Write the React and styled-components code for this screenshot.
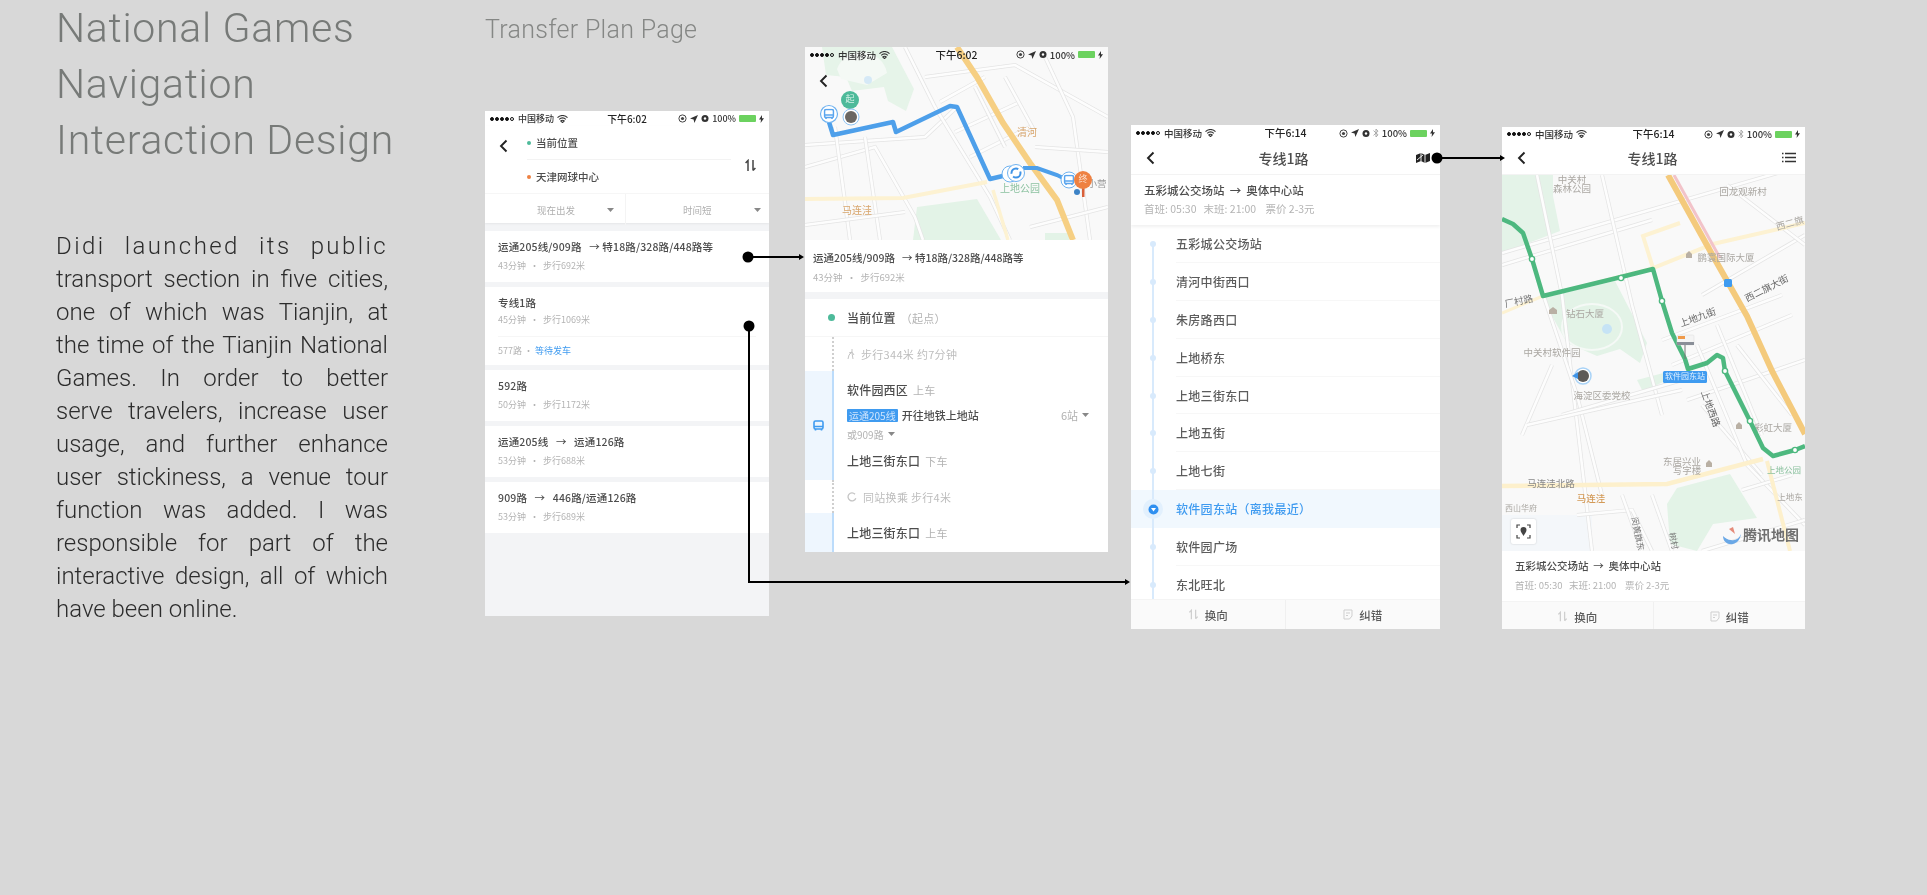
import React from "react";
import styled, { createGlobalStyle } from "styled-components";

const CJK = `"Noto Sans CJK SC", "Noto Sans", sans-serif`;

const GlobalStyle = createGlobalStyle`
  html, body {
    margin: 0;
    padding: 0;
    background: #d8d8d8;
  }
  body {
    overflow: hidden;
  }
`;

const Page = styled.div`
  position: relative;
  display: flex;
  align-items: flex-start;
  width: 1927px;
  height: 895px;
  background: #d8d8d8;
  overflow: hidden;
`;

const Intro = styled.div`
  flex: 0 0 332px;
  min-width: 0;
  margin-left: 56px;
`;

const Title = styled.h1`
  margin: 0;
  font: 300 41px/56px Roboto, sans-serif;
  letter-spacing: 0.7px;
  white-space: nowrap;
  color: #777a78;
  filter: blur(0.3px);
`;

const Body = styled.div`
  margin-top: 62px;
  font: 300 24px/33px Roboto, sans-serif;
  color: #2c2c2c;
  filter: blur(0.25px);
`;

const BodyLine = styled.div`
  white-space: nowrap;
  text-align: justify;
  text-align-last: ${(p) => (p.$last ? "left" : "justify")};
  letter-spacing: ${(p) => (p.$loose ? "2.4px" : "0")};
`;

const Showcase = styled.div`
  margin-left: 97px;
`;

const SectionName = styled.h2`
  margin: 0;
  height: 47px;
  padding-top: 13px;
  box-sizing: border-box;
  font: 300 25px/34px Roboto, sans-serif;
  letter-spacing: 0.3px;
  white-space: nowrap;
  color: #858785;
  filter: blur(0.3px);
`;

const Screens = styled.div`
  display: flex;
  align-items: flex-start;
`;

const Screen = styled.div`
  position: relative;
  display: flex;
  flex-direction: column;
  flex: none;
  width: ${(p) => p.$w}px;
  height: ${(p) => p.$h}px;
  margin-top: ${(p) => p.$top}px;
  margin-left: ${(p) => p.$left}px;
  background: ${(p) => p.$bg || "#fff"};
  overflow: hidden;
  font-family: ${CJK};
  filter: blur(0.45px);
`;

/* status bar */
const Status = styled.div`
  display: flex;
  align-items: center;
  justify-content: space-between;
  flex: none;
  height: ${(p) => p.$h}px;
  padding: 0 ${(p) => p.$pad}px;
  font-size: ${(p) => p.$fs}px;
  line-height: 12px;
  font-weight: 500;
  color: #333;
  background: ${(p) => (p.$over ? "transparent" : "#fff")};
  ${(p) => p.$over && "position: absolute; top: 0; left: 0; right: 0; z-index: 2;"}
`;

const StatusSide = styled.div`
  display: flex;
  align-items: center;
  gap: 3px;
  flex: 0 0 38%;
  justify-content: ${(p) => (p.$right ? "flex-end" : "flex-start")};
`;

const Time = styled.span`
  font-size: 1.1em;
  font-weight: 500;
  color: #222;
`;

const Signal = styled.span`
  display: inline-flex;
  gap: 1px;
  margin-right: 1px;
`;

const SignalDot = styled.i`
  width: 4px;
  height: 4px;
  border-radius: 50%;
  box-sizing: border-box;
  background: ${(p) => (p.$off ? "transparent" : "#111")};
  border: 1px solid #111;
`;

const Battery = styled.span`
  position: relative;
  width: 17px;
  height: 7px;
  border-radius: 1px;
  background: #6cd25f;
`;

function StatusBar({ time, bt, h = 19, pad = 5, fs = 9, over }) {
  return (
    <Status $h={h} $pad={pad} $fs={fs} $over={over}>
      <StatusSide>
        <Signal>
          {[0, 1, 2, 3, 4].map((i) => (
            <SignalDot key={i} $off={i === 4} />
          ))}
        </Signal>
        <span>中国移动</span>
        <svg width="11" height="8" viewBox="0 0 11 8">
          <path d="M.5 2.6a7 7 0 0 1 10 0M2.2 4.3a4.6 4.6 0 0 1 6.6 0M5.5 7.6 3.8 5.9a2.4 2.4 0 0 1 3.4 0z" fill="none" stroke="#333" strokeWidth="1.1" />
        </svg>
      </StatusSide>
      <Time>{time}</Time>
      <StatusSide $right>
        <svg width="9" height="9" viewBox="0 0 9 9">
          <circle cx="4.5" cy="4.5" r="3.6" fill="none" stroke="#444" />
          <circle cx="4.5" cy="4.5" r="1.6" fill="#444" />
        </svg>
        <svg width="8" height="8" viewBox="0 0 8 8">
          <path d="M8 0 0 3.6l3.6.8L4.4 8z" fill="#333" />
        </svg>
        <svg width="8" height="9" viewBox="0 0 8 9">
          <circle cx="4" cy="4.5" r="3.5" fill="#333" />
          <circle cx="4" cy="4.5" r="1.2" fill="#fff" />
        </svg>
        {bt && (
          <svg width="6" height="10" viewBox="0 0 6 10">
            <path d="M.5 2.6 5 6.8 3 9V1l2 2.2L.5 7.4" fill="none" stroke="#aaa" />
          </svg>
        )}
        <span>100%</span>
        <Battery />
        <svg width="5" height="8" viewBox="0 0 5 8">
          <path d="M3 0 0 4.6h2L1.6 8 5 3.2H3z" fill="#333" />
        </svg>
      </StatusSide>
    </Status>
  );
}

function Back({ size = 16 }) {
  return (
    <svg width={size} height={size} viewBox="0 0 16 16">
      <path d="M10.5 2.5 5 8l5.5 5.5" fill="none" stroke="#222" strokeWidth="1.9" />
    </svg>
  );
}

function Swap({ color = "#444", size = 13 }) {
  return (
    <svg width={size} height={size} viewBox="0 0 13 13">
      <path d="M4 12V1.5M1.6 4 4 1.5 4 4M9 1v10.5M11.4 9 9 11.5" fill="none" stroke={color} strokeWidth="1.5" />
    </svg>
  );
}

function Caret({ color = "#888" }) {
  return (
    <svg width="7" height="4" viewBox="0 0 7 4">
      <path d="M0 0h7L3.5 4z" fill={color} />
    </svg>
  );
}

/* plan list */
const PlanHeader = styled.div`
  position: relative;
  flex: none;
  height: 97px;
  background: #fff;
  box-shadow: 0 1px 2px rgba(0, 0, 0, 0.06);
`;

const PlaceRow = styled.div`
  display: flex;
  align-items: center;
  gap: 5px;
  height: 33px;
  margin-left: 42px;
  margin-right: 38px;
  font-size: 10.5px;
  color: #4d4d4d;
  font-weight: 500;
  border-bottom: ${(p) => (p.$line ? "1px solid #f3f3f3" : "0")};
`;

const PlaceDot = styled.i`
  width: 4px;
  height: 4px;
  border-radius: 50%;
  background: ${(p) => p.$color};
`;

const HeaderBack = styled.div`
  position: absolute;
  left: 11px;
  top: 9px;
`;

const HeaderSwap = styled.div`
  position: absolute;
  right: 12px;
  top: 27px;
`;

const Filters = styled.div`
  display: grid;
  grid-template-columns: 141px 1fr;
  height: 31px;
  border-top: 1px solid #f6f6f6;
`;

const Filter = styled.div`
  display: flex;
  align-items: center;
  justify-content: space-between;
  padding: 0 ${(p) => p.$right}px 0 ${(p) => p.$left}px;
  font-size: 9.5px;
  color: #b0b0b0;
  border-right: ${(p) => (p.$split ? "1px solid #f4f4f4" : "0")};
`;

const Plans = styled.div`
  flex: 1;
  display: flex;
  flex-direction: column;
  gap: 5px;
  padding-top: 8px;
  background: #f3f4f6;
`;

const Plan = styled.div`
  flex: none;
  height: ${(p) => p.$h || 51}px;
  padding: 8px 13px 0;
  box-sizing: border-box;
  background: #fff;
`;

const PlanTitle = styled.div`
  font-size: 10.5px;
  line-height: 16px;
  font-weight: 500;
  letter-spacing: 0.15px;
  color: #4d4d4d;
  white-space: pre;
`;

const PlanMeta = styled.div`
  margin-top: ${(p) => p.$gap || 4}px;
  font-size: 9px;
  line-height: 14px;
  color: #b4b4b4;
  white-space: pre;
`;

const PlanLine = styled.div`
  margin-top: 9px;
  padding-top: 7px;
  border-top: 1px solid #f6f6f6;
  font-size: 9px;
  line-height: 14px;
  color: #b4b4b4;
`;

const Waiting = styled.span`
  color: #3f9bf0;
`;

const plans = [
  ["运通205线/909路   → 特18路/328路/448路等", "43分钟  ·  步行692米"],
  null,
  ["592路", "50分钟  ·  步行1172米"],
  ["运通205线   →   运通126路", "53分钟  ·  步行688米"],
  ["909路   →   446路/运通126路", "53分钟  ·  步行689米"],
];

function PlanPage() {
  return (
    <Screen $w={284} $h={505} $top={64} $left={0} $bg="#f3f4f6">
      <StatusBar time="下午6:02" h={15} />
      <PlanHeader>
        <HeaderBack>
          <Back />
        </HeaderBack>
        <HeaderSwap>
          <Swap />
        </HeaderSwap>
        <PlaceRow $line>
          <PlaceDot $color="#4dba9a" />
          当前位置
        </PlaceRow>
        <PlaceRow>
          <PlaceDot $color="#ee8142" />
          天津网球中心
        </PlaceRow>
        <Filters>
          <Filter $left={52} $right={11} $split>
            现在出发 <Caret />
          </Filter>
          <Filter $left={57} $right={8}>
            时间短 <Caret />
          </Filter>
        </Filters>
      </PlanHeader>
      <Plans>
        {plans.map((plan, i) =>
          plan ? (
            <Plan key={i}>
              <PlanTitle>{plan[0]}</PlanTitle>
              <PlanMeta>{plan[1]}</PlanMeta>
            </Plan>
          ) : (
            <Plan key={i} $h={78}>
              <PlanTitle>专线1路</PlanTitle>
              <PlanMeta $gap={2}>45分钟  ·  步行1069米</PlanMeta>
              <PlanLine>
                577路 · <Waiting>等待发车</Waiting>
              </PlanLine>
            </Plan>
          )
        )}
      </Plans>
    </Screen>
  );
}

/* route detail */
const MapWrap = styled.div`
  position: relative;
  flex: none;
  height: ${(p) => p.$h}px;
  background: #f9f9f9;
`;

const MapBack = styled.div`
  position: absolute;
  left: 11px;
  top: 23px;
  z-index: 2;
`;

const Summary = styled.div`
  flex: none;
  height: ${(p) => p.$h}px;
  padding: ${(p) => p.$pt}px 0 0 ${(p) => p.$pl}px;
  box-sizing: border-box;
  background: #fff;
  ${(p) => p.$shadow && "box-shadow: 0 2px 3px rgba(0, 0, 0, 0.06); position: relative; z-index: 1;"}
`;

const SummaryTitle = styled.div`
  font-size: ${(p) => p.$fs || 11}px;
  line-height: 18px;
  font-weight: 500;
  color: #4d4d4d;
  white-space: pre;
`;

const SummaryMeta = styled.div`
  margin-top: 1px;
  font-size: ${(p) => p.$fs || 10}px;
  line-height: 18px;
  color: #b4b4b4;
  white-space: pre;
`;

const Legs = styled.div`
  flex: 1;
  display: flex;
  flex-direction: column;
  margin-top: 7px;
  background: #fff;
  overflow: hidden;
`;

const Leg = styled.div`
  display: flex;
  flex: none;
  height: ${(p) => p.$h}px;
  border-bottom: ${(p) => (p.$line ? "1px solid #f6f6f6" : "0")};
  box-sizing: border-box;
`;

const LegSide = styled.div`
  display: flex;
  flex: 0 0 29px;
  align-items: center;
  justify-content: ${(p) => (p.$end ? "flex-end" : "center")};
  box-sizing: border-box;
  background: ${(p) => (p.$ride ? "#eef6fe" : "#fff")};
  border-right: ${(p) => (p.$ride ? "2px solid #bcdcfb" : p.$walk ? "2px dotted #cfcfcf" : "2px solid transparent")};
`;

const LegMain = styled.div`
  flex: 1;
  display: flex;
  flex-direction: ${(p) => (p.$column ? "column" : "row")};
  align-items: ${(p) => (p.$column ? "stretch" : "center")};
  gap: ${(p) => (p.$column ? 0 : 6)}px;
  padding: ${(p) => p.$pt || 0}px 19px 0 13px;
`;

const Dot = styled.i`
  width: 7px;
  height: 7px;
  margin-right: -3px;
  border-radius: 50%;
  background: #4dba9a;
`;

const StopName = styled.div`
  height: ${(p) => p.$h || 20}px;
  font-size: 12px;
  line-height: ${(p) => p.$h || 20}px;
  font-weight: 500;
  color: #4d4d4d;
  letter-spacing: 0.2px;
`;

const Hint = styled.span`
  margin-left: 5px;
  font-size: 11px;
  font-weight: 400;
  color: #b4b4b4;
`;

const WalkText = styled.span`
  font-size: 11px;
  color: #bdbdbd;
  letter-spacing: 0.3px;
`;

const LineRow = styled.div`
  display: flex;
  align-items: center;
  gap: 4px;
  height: 16px;
  margin-top: 7px;
  font-size: 11px;
  font-weight: 500;
  color: #4d4d4d;
`;

const LineTag = styled.span`
  padding: 0 2px;
  font-size: 10px;
  font-weight: 400;
  line-height: 13px;
  color: #cfe5fd;
  background: #3f9bf0;
  border-radius: 1px;
`;

const StopCount = styled.span`
  display: flex;
  align-items: center;
  gap: 4px;
  margin-left: auto;
  font-weight: 400;
  color: #b0b0b0;
`;

const AltLine = styled.div`
  display: flex;
  align-items: center;
  gap: 4px;
  height: 16px;
  margin: 3px 0 9px;
  font-size: 10px;
  color: #b4b4b4;
`;

function BusIcon({ color = "#3f9bf0", size = 11 }) {
  return (
    <svg width={size} height={size} viewBox="0 0 11 11">
      <rect x="1" y="1" width="9" height="8" rx="1.5" fill="none" stroke={color} strokeWidth="1.6" />
      <path d="M1 6.5h9M2.5 9v1.5M8.5 9v1.5" stroke={color} strokeWidth="1.6" />
    </svg>
  );
}

function MapLabel({ x, y, children, c = "#aaa7a2", fs = 9.5, r, anchor = "middle", fw }) {
  return (
    <text
      x={x}
      y={y}
      fill={c}
      fontSize={fs}
      fontWeight={fw}
      textAnchor={anchor}
      dominantBaseline="middle"
      fontFamily={CJK}
      transform={r ? `rotate(${r} ${x} ${y})` : undefined}
    >
      {children}
    </text>
  );
}

const line = (pts) => pts.map((p) => p.join(",")).join(" ");

function Roads({ paths, width = 2.6 }) {
  return paths.map((d, i) => (
    <g key={i} fill="none">
      <polyline points={d} stroke="#e4e4e4" strokeWidth={width + 1.4} />
      <polyline points={d} stroke="#fdfdfd" strokeWidth={width} />
    </g>
  ));
}

function RouteMap() {
  return (
    <svg width="303" height="193" viewBox="0 0 303 193">
      <rect width="303" height="193" fill="#f9f9f9" />
      <path d="M17 0h70l22 42-8 22-18-10-4-14-32 4-6-14-20-2z" fill="#e6f4e9" />
      <path d="M32 22a26 26 0 0 1 50 4l-20 12-26-6z" fill="#f4f9f5" />
      <circle cx="63" cy="33" r="4" fill="#d5e9f6" />
      <path d="M112 160l60-8 24 41H108z" fill="#e3f3e7" />
      <path d="M240 186h24v7h-24z" fill="#e3f3e7" />
      <Roads
        paths={[
          "0,98 120,90 152,60",
          "0,120 70,100 110,170 118,193",
          "100,0 130,60 185,150 205,193",
          "30,80 45,193",
          "60,90 75,193",
          "120,30 210,18 303,70",
          "135,55 180,30",
          "150,85 215,55",
          "165,110 225,80",
          "170,40 200,100",
          "200,30 230,85",
          "240,10 268,70 285,193",
          "225,180 303,160",
          "0,178 100,165",
          "230,100 303,105",
        ]}
      />
      <polyline points="0,152 98,151 182,135" fill="none" stroke="#fdf2d2" strokeWidth="4" />
      <polyline points="188,143 203,193" fill="none" stroke="#fdf2d2" strokeWidth="3.5" />
      <polyline points="152,0 172,30 198,76 225,116 252,153 268,193" fill="none" stroke="#f6cf83" strokeWidth="6" />
      <MapLabel x={222} y={86} c="#d8a56c" fs={10}>清河</MapLabel>
      <MapLabel x={215} y={142} c="#8cc2a0" fs={10}>上地公园</MapLabel>
      <MapLabel x={52} y={164} c="#d8a56c" fs={10}>马连洼</MapLabel>
      <MapLabel x={292} y={137} c="#999" fs={9.5}>小营</MapLabel>
      <polyline
        points={line([[24, 75], [28, 88], [88, 75], [91, 85], [145, 59], [152, 60], [185, 132], [202, 128]])}
        fill="none"
        stroke="#4d9fea"
        strokeWidth="4.5"
        strokeLinejoin="round"
      />
      <polyline points={line([[218, 121], [232, 121], [252, 128], [262, 133]])} fill="none" stroke="#4d9fea" strokeWidth="4" />
      <circle cx="24" cy="67" r="8.5" fill="#fff" stroke="#6fb2f0" strokeWidth="1.2" />
      <g transform="translate(18.5 61.5)">
        <BusIcon color="#5aa5ee" />
      </g>
      <circle cx="45" cy="53" r="9" fill="#4dba9a" />
      <MapLabel x={45} y={53} c="#d6f2e8" fs={9}>起</MapLabel>
      <circle cx="46" cy="70" r="8" fill="#fff" stroke="#8ec3f3" />
      <circle cx="46" cy="70" r="6" fill="#6b6763" />
      <circle cx="205" cy="127" r="8" fill="#fff" stroke="#6fb2f0" />
      <circle cx="211" cy="126" r="8.5" fill="#fff" stroke="#6fb2f0" />
      <circle cx="211" cy="126" r="4.5" fill="none" stroke="#3f93e6" strokeWidth="2" strokeDasharray="10 3" />
      <circle cx="264" cy="133" r="8" fill="#fff" stroke="#6fb2f0" />
      <g transform="translate(258.5 127.5)">
        <BusIcon color="#5aa5ee" />
      </g>
      <circle cx="272" cy="145" r="3" fill="#3d83c6" />
      <path d="M277 140h2.5v10H277z" fill="#d8603a" />
      <circle cx="278" cy="133" r="9" fill="#ee8142" />
      <MapLabel x={278} y={133} c="#fbe0cf" fs={9}>终</MapLabel>
    </svg>
  );
}

function RoutePage() {
  return (
    <Screen $w={303} $h={505} $top={0} $left={36} $bg="#f3f4f6">
      <MapWrap $h={193}>
        <StatusBar time="下午6:02" over h={15} fs={9.5} pad={5} />
        <MapBack>
          <Back />
        </MapBack>
        <RouteMap />
      </MapWrap>
      <Summary $h={52} $pt={9} $pl={8}>
        <SummaryTitle $fs={10.5}>运通205线/909路   → 特18路/328路/448路等</SummaryTitle>
        <SummaryMeta $fs={9.5}>43分钟  ·  步行692米</SummaryMeta>
      </Summary>
      <Legs>
        <Leg $h={38} $line>
          <LegSide $end>
            <Dot />
          </LegSide>
          <LegMain>
            <StopName>
              当前位置<Hint>（起点）</Hint>
            </StopName>
          </LegMain>
        </Leg>
        <Leg $h={34}>
          <LegSide $walk />
          <LegMain>
            <svg width="8" height="12" viewBox="0 0 8 12">
              <path d="M5 1v3L2 7 1 11M5 5l1 6M5 4 2 5M5 4l2 3" fill="none" stroke="#c4c4c4" strokeWidth="1" />
            </svg>
            <WalkText>步行344米 约7分钟</WalkText>
          </LegMain>
        </Leg>
        <Leg $h={109}>
          <LegSide $ride>
            <BusIcon />
          </LegSide>
          <LegMain $column $pt={9}>
            <StopName>
              软件园西区<Hint>上车</Hint>
            </StopName>
            <LineRow>
              <LineTag>运通205线</LineTag>
              开往地铁上地站
              <StopCount>
                6站 <Caret />
              </StopCount>
            </LineRow>
            <AltLine>
              或909路 <Caret />
            </AltLine>
            <StopName>
              上地三街东口<Hint>下车</Hint>
            </StopName>
          </LegMain>
        </Leg>
        <Leg $h={33}>
          <LegSide $walk />
          <LegMain>
            <svg width="10" height="10" viewBox="0 0 10 10">
              <path d="M8.8 6.2A4 4 0 1 1 8 2.2" fill="none" stroke="#c4c4c4" strokeWidth="1.3" />
            </svg>
            <WalkText>同站换乘 步行4米</WalkText>
          </LegMain>
        </Leg>
        <Leg $h={40}>
          <LegSide $ride />
          <LegMain>
            <StopName>
              上地三街东口<Hint>上车</Hint>
            </StopName>
          </LegMain>
        </Leg>
      </Legs>
    </Screen>
  );
}

/* line detail */
const NavBar = styled.div`
  display: flex;
  align-items: center;
  justify-content: space-between;
  flex: none;
  height: ${(p) => p.$h}px;
  padding: 0 ${(p) => p.$pr}px 0 ${(p) => p.$pl}px;
  background: #fff;
  border-bottom: 1px solid #f3f3f3;
`;

const NavTitle = styled.div`
  margin-right: 7px;
  font-size: 14px;
  line-height: 16px;
  font-weight: 500;
  color: #4d4d4d;
`;

const Stops = styled.div`
  flex: 1;
  min-height: 0;
  overflow: hidden;
  background: #fff;
`;

const StopRow = styled.div`
  position: relative;
  height: 37.9px;
  padding-left: 45px;
  background: ${(p) => (p.$active ? "#f1f8fe" : "#fff")};

  &::before {
    content: "";
    position: absolute;
    left: 21px;
    top: ${(p) => (p.$first ? "50%" : "0")};
    bottom: 0;
    width: 2px;
    background: #d8eafc;
  }
  &::after {
    content: "";
    position: absolute;
    left: 19px;
    top: 50%;
    width: 6px;
    height: 6px;
    margin-top: -3px;
    border-radius: 50%;
    background: #d8eafc;
    display: ${(p) => (p.$active ? "none" : "block")};
  }
`;

const StopLabel = styled.div`
  height: 100%;
  box-sizing: border-box;
  font-size: 12px;
  line-height: 37px;
  font-weight: 500;
  letter-spacing: 0.3px;
  color: ${(p) => (p.$active ? "#3f9bf0" : "#5c5c5c")};
  border-bottom: 1px solid ${(p) => (p.$active ? "transparent" : "#f7f7f7")};
`;

const HereMark = styled.div`
  position: absolute;
  left: 12px;
  top: 9px;
  z-index: 1;
  width: 20px;
  height: 20px;
  display: flex;
  align-items: center;
  justify-content: center;
  border-radius: 50%;
  background: #e2f0fd;
`;

const ActionBar = styled.div`
  display: grid;
  grid-template-columns: 1fr 1fr;
  flex: none;
  height: 29px;
  background: #fafafa;
  border-top: 1px solid #f4f4f4;
`;

const Action = styled.div`
  display: flex;
  align-items: center;
  justify-content: center;
  gap: 6px;
  font-size: 11.5px;
  line-height: 14px;
  font-weight: 500;
  color: #5c5c5c;
  border-right: ${(p) => (p.$split ? "1px solid #f0f0f0" : "0")};
`;

function Actions() {
  return (
    <ActionBar>
      <Action $split>
        <Swap color="#cfcfcf" size={11} />
        换向
      </Action>
      <Action>
        <svg width="10" height="11" viewBox="0 0 10 11">
          <path d="M1 1h8v6L6.5 10H1zM3 4h4M3 6.5h2" fill="none" stroke="#cfcfcf" />
        </svg>
        纠错
      </Action>
    </ActionBar>
  );
}

const stops = ["五彩城公交场站", "清河中街西口", "朱房路西口", "上地桥东", "上地三街东口", "上地五街", "上地七街", "软件园东站（离我最近）", "软件园广场", "东北旺北"];

function StopsPage() {
  return (
    <Screen $w={309} $h={504} $top={78} $left={23}>
      <StatusBar time="下午6:14" bt h={16} fs={9.5} pad={5} />
      <NavBar $h={33} $pl={12} $pr={9}>
        <Back />
        <NavTitle>专线1路</NavTitle>
        <svg width="16" height="12" viewBox="0 0 16 12">
          <path d="M1 3l5-2 4 2 5-2v8l-5 2-4-2-5 2z" fill="#222" />
          <path d="M6 1v8M10 3v8M2 8l6-5" stroke="#fff" strokeWidth="0.9" />
        </svg>
      </NavBar>
      <Summary $h={50} $pt={6} $pl={13} $shadow>
        <SummaryTitle $fs={11.5}>五彩城公交场站  →  奥体中心站</SummaryTitle>
        <SummaryMeta $fs={10.5}>首班: 05:30   末班: 21:00    票价 2-3元</SummaryMeta>
      </Summary>
      <Stops>
        {stops.map((name, i) => (
          <StopRow key={name} $first={i === 0} $active={i === 7}>
            {i === 7 && (
              <HereMark>
                <svg width="11" height="11" viewBox="0 0 11 11">
                  <circle cx="5.5" cy="5.5" r="5" fill="#2e8ff0" />
                  <path d="M3 4h5L5.5 7.5z" fill="#fff" />
                </svg>
              </HereMark>
            )}
            <StopLabel $active={i === 7}>{name}</StopLabel>
          </StopRow>
        ))}
      </Stops>
      <Actions />
    </Screen>
  );
}

/* line map */
const LocateButton = styled.div`
  position: absolute;
  left: 9px;
  bottom: 7px;
  width: 25px;
  height: 25px;
  display: flex;
  align-items: center;
  justify-content: center;
  background: #fff;
  border-radius: 2px;
  box-shadow: 0 0 2px rgba(0, 0, 0, 0.2);
`;

const lineStops = [[30, 84], [119, 103], [160, 126], [223, 196], [248, 246], [293, 275]];

function LineMap() {
  return (
    <svg width="303" height="376" viewBox="0 0 303 376">
      <rect width="303" height="376" fill="#f9f9f9" />
      <path d="M0 0h51v21l7 35L0 78z" fill="#e4f3e8" />
      <path d="M41 123l72-17 32 62-7 20-20-14-23 7-30-13-15-27z" fill="#e3f3e7" />
      <ellipse cx="90" cy="152" rx="30" ry="23" fill="none" stroke="#f5f9f6" strokeWidth="2" />
      <circle cx="105" cy="154" r="5" fill="#c6e3f5" />
      <path d="M165 329l10-16 53-14 27 44-44 6-16 27-27-7z" fill="#e3f3e7" />
      <path d="M135 205l30-8v8l-24 12z" fill="#e3f3e7" />
      <path d="M0 340h90v36H0z" fill="#f4f7fa" />
      <Roads
        paths={[
          "0,78 303,-10",
          "0,90 150,45",
          "35,0 60,120 90,376",
          "100,0 130,130 160,240",
          "42,122 75,220 100,320",
          "60,240 180,205",
          "50,190 20,260",
          "25,250 180,215",
          "200,120 303,60",
          "160,165 280,120",
          "170,190 290,140",
          "185,225 303,185",
          "200,230 260,300",
          "195,170 245,290 303,350",
          "215,150 260,260",
          "235,170 290,240",
          "75,340 130,335 150,376",
          "120,320 140,376",
          "150,320 170,376",
          "240,315 290,300",
          "225,10 303,70",
          "200,376 303,345",
        ]}
      />
      <polyline points="303,48 211,69 151,93 141,61 178,48" fill="none" stroke="#fdf2d2" strokeWidth="4" />
      <polyline points="0,138 41,121 151,93" fill="none" stroke="#fdf2d2" strokeWidth="3" />
      <polyline points="0,311 165,309 261,284" fill="none" stroke="#fdf0cc" strokeWidth="4.5" />
      <polyline points="265,286 288,376" fill="none" stroke="#fdf0cc" strokeWidth="4" />
      <polyline points="172,0 218,83" fill="none" stroke="#f2c3c9" strokeWidth="3" />
      <polyline points="166,0 211,81 245,141 270,196 303,259" fill="none" stroke="#f4ca7c" strokeWidth="6" />

      <MapLabel x={70} y={5}>中关村</MapLabel>
      <MapLabel x={70} y={14}>森林公园</MapLabel>
      <MapLabel x={241} y={17}>回龙观新村</MapLabel>
      <MapLabel x={288} y={49} r={-15}>西二旗</MapLabel>
      <MapLabel x={224} y={83}>鹏寰国际大厦</MapLabel>
      <MapLabel x={17} y={127} r={-12} c="#777">厂村路</MapLabel>
      <MapLabel x={83} y={139}>钻石大厦</MapLabel>
      <MapLabel x={265} y={114} r={-27} c="#666">西二旗大街</MapLabel>
      <MapLabel x={196} y={143} r={-20} c="#666">上地九街</MapLabel>
      <MapLabel x={50} y={178}>中关村软件园</MapLabel>
      <MapLabel x={100} y={221}>海淀区委党校</MapLabel>
      <MapLabel x={208} y={234} r={70} c="#666">上地西路</MapLabel>
      <MapLabel x={271} y={253}>彩虹大厦</MapLabel>
      <MapLabel x={180} y={287}>东居兴业</MapLabel>
      <MapLabel x={185} y={296}>写字楼</MapLabel>
      <MapLabel x={49} y={309} c="#888">马连洼北路</MapLabel>
      <MapLabel x={89} y={324} c="#d39a58" fw={500}>马连洼</MapLabel>
      <MapLabel x={19} y={334} fs={8}>西山华府</MapLabel>
      <MapLabel x={282} y={296} fs={8.5} c="#8cc2a0">上地公园</MapLabel>
      <MapLabel x={288} y={323} fs={8.5}>上地东</MapLabel>
      <MapLabel x={135} y={359} fs={8.5} r={78} c="#777">闵黄旗东</MapLabel>
      <MapLabel x={171} y={366} fs={8.5} r={78} c="#777">树村</MapLabel>

      <g fill="#b9b0a4">
        <path d="M47 135l4-3 4 3v4h-8z" />
        <path d="M184 79l3-3 3 3v4h-6z" />
        <path d="M234 250l3-3 3 3v4h-6z" />
        <path d="M204 288l3-3 3 3v4h-6z" />
      </g>
      <polyline
        points={line([[0, 44], [11, 49], [21, 58], [30, 84], [41, 121], [115, 103], [151, 94], [160, 126], [170, 158], [183, 184], [186, 194], [205, 188], [215, 180], [221, 183], [223, 196], [248, 246], [261, 273], [271, 281], [293, 275], [303, 271]])}
        fill="none"
        stroke="#4db87f"
        strokeWidth="4.5"
        strokeLinejoin="round"
      />
      {lineStops.map(([x, y]) => (
        <circle key={x} cx={x} cy={y} r="2.6" fill="#fff" stroke="#4db87f" strokeWidth="1.4" />
      ))}
      <rect x="222" y="104" width="8" height="8" rx="1.5" fill="#3f9bf0" />
      <rect x="175" y="160" width="17" height="10" rx="1" fill="#f4f4f4" stroke="#ddd" strokeWidth="0.5" />
      <rect x="176" y="161" width="7" height="3" fill="#ef9a4a" />
      <rect x="175" y="167" width="17" height="3" fill="#8a8f98" />
      <path d="M183 170v14" stroke="#777" strokeWidth="1" />
      <circle cx="81" cy="201" r="8" fill="#fff" stroke="#a9d3f7" strokeWidth="1.5" />
      <circle cx="81" cy="201" r="6" fill="#5c5a58" />
      <path d="M70 201l6-4v7z" fill="#3f93e6" />
      <rect x="161" y="196" width="44" height="12" rx="1.5" fill="#3f9bf0" />
      <MapLabel x={183} y={202} fs={8} c="#e0f0ff">软件园东站</MapLabel>
      <path d="M221 361c0 6 5 9 10 8 4-1 7-4 8-10-2 5-6 7-10 6-3 0-6-2-8-4z" fill="#6aa8e6" />
      <path d="M227 354l6 5-2-7z" fill="#e58b7a" />
      <MapLabel x={269} y={361} fs={14} c="#6f6f6f" fw={700}>腾讯地图</MapLabel>
    </svg>
  );
}

function MapPage() {
  return (
    <Screen $w={303} $h={502} $top={80} $left={62}>
      <StatusBar time="下午6:14" bt h={14} fs={9.5} pad={5} />
      <NavBar $h={33} $pl={12} $pr={9}>
        <Back />
        <NavTitle>专线1路</NavTitle>
        <svg width="14" height="11" viewBox="0 0 14 11">
          <path d="M3 1.5h11M3 5.5h11M3 9.5h11M0 1.5h1.5M0 5.5h1.5M0 9.5h1.5" stroke="#333" strokeWidth="1.5" />
        </svg>
      </NavBar>
      <MapWrap $h={376}>
        <LineMap />
        <LocateButton>
          <svg width="15" height="15" viewBox="0 0 15 15">
            <path d="M1 4V1h3M11 1h3v3M14 11v3h-3M4 14H1v-3" fill="none" stroke="#444" strokeWidth="1.2" />
            <path d="M7.5 3a3 3 0 0 1 3 3c0 2-2 4-3 6-1-2-3-4-3-6a3 3 0 0 1 3-3z" fill="#444" />
          </svg>
        </LocateButton>
      </MapWrap>
      <Summary $h={50} $pt={6} $pl={13}>
        <SummaryTitle $fs={10.5}>五彩城公交场站  →  奥体中心站</SummaryTitle>
        <SummaryMeta $fs={9.5}>首班: 05:30   末班: 21:00    票价 2-3元</SummaryMeta>
      </Summary>
      <Actions />
    </Screen>
  );
}

/* arrows between the screens */
const Connectors = styled.svg`
  position: absolute;
  left: 0;
  top: 0;
  z-index: 5;
  pointer-events: none;
`;

function Wires() {
  return (
    <Connectors width="1927" height="895" viewBox="0 0 1927 895">
      <g fill="none" stroke="#000" strokeWidth="2">
        <path d="M748 257H800" />
        <path d="M749 326V582H1127" />
        <path d="M1437 158H1501" />
      </g>
      <circle cx="748" cy="257" r="5.5" />
      <circle cx="749" cy="326" r="5.5" />
      <circle cx="1437" cy="158" r="5.5" />
      <path d="M799 254l5 3-5 3zM1125 579l5 3-5 3zM1500 155l5 3-5 3z" />
    </Connectors>
  );
}

const bodyLines = [
  "Didi launched its public",
  "transport section in five cities,",
  "one of which was Tianjin, at",
  "the time of the Tianjin National",
  "Games. In order to better",
  "serve travelers, increase user",
  "usage, and further enhance",
  "user stickiness, a venue tour",
  "function was added. I was",
  "responsible for part of the",
  "interactive design, all of which",
  "have been online.",
];

export default function App() {
  return (
    <Page>
      <GlobalStyle />
      <Intro>
        <Title>
          National Games
          <br />
          Navigation
          <br />
          Interaction Design
        </Title>
        <Body>
          {bodyLines.map((text, i) => (
            <BodyLine key={text} $loose={i === 0} $last={i === bodyLines.length - 1}>
              {text}
            </BodyLine>
          ))}
        </Body>
      </Intro>
      <Showcase>
        <SectionName>Transfer Plan Page</SectionName>
        <Screens>
          <PlanPage />
          <RoutePage />
          <StopsPage />
          <MapPage />
        </Screens>
      </Showcase>
      <Wires />
    </Page>
  );
}
